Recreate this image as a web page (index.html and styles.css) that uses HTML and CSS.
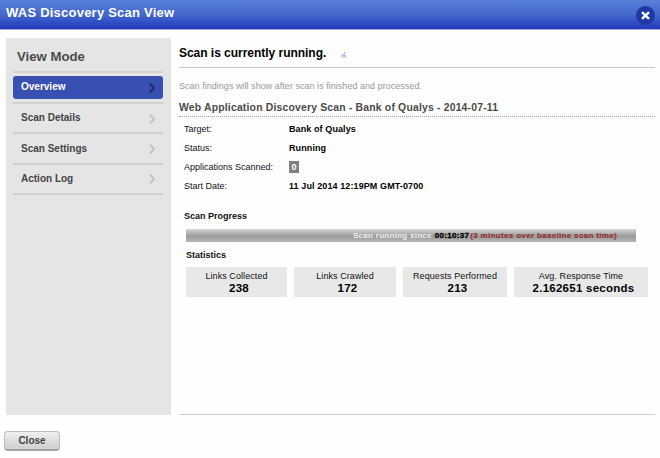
FILE: index.html
```html
<!DOCTYPE html>
<html lang="en">
<head>
<meta charset="utf-8">
<title>WAS Discovery Scan View</title>
<link rel="stylesheet" href="styles.css">
</head>
<body>
<header class="titlebar">
  <h1>WAS Discovery Scan View</h1>
  <button class="dismiss" aria-label="Close window"><svg width="9" height="9" viewBox="0 0 9 9"><path d="M1 1.200l7 6.600M8 1.200l-7 6.600" stroke="#fff" stroke-width="2.400"/></svg></button>
</header>
<div class="body">
  <nav class="sidebar">
    <h2>View Mode</h2>
    <ul>
      <li class="item active"><a><span>Overview</span><svg class="chev" width="6" height="10" viewBox="0 0 6 10"><path d="M1 .7l4 4.300-4 4.300"/></svg></a></li>
      <li class="item"><a><span>Scan Details</span><svg class="chev" width="6" height="10" viewBox="0 0 6 10"><path d="M1 .7l4 4.300-4 4.300"/></svg></a></li>
      <li class="item"><a><span>Scan Settings</span><svg class="chev" width="6" height="10" viewBox="0 0 6 10"><path d="M1 .7l4 4.300-4 4.300"/></svg></a></li>
      <li class="item"><a><span>Action Log</span><svg class="chev" width="6" height="10" viewBox="0 0 6 10"><path d="M1 .7l4 4.300-4 4.300"/></svg></a></li>
    </ul>
  </nav>
  <main class="content">
    <div class="status"><span>Scan is currently running.</span><svg class="spinner" width="8" height="8" viewBox="0 0 8 8"><ellipse cx="3" cy="5" rx="2.5" ry="2" fill="#ccd6ee"/><path d="M5 1L3.500 4.500M5.500 4v2.500" stroke="#a9b8df" stroke-width="1.300"/></svg></div>
    <p class="note">Scan findings will show after scan is finished and processed.</p>
    <h3 class="scan-name">Web Application Discovery Scan - Bank of Qualys - 2014-07-11</h3>
    <dl class="facts">
      <dt>Target:</dt><dd>Bank of Qualys</dd>
      <dt>Status:</dt><dd>Running</dd>
      <dt>Applications Scanned:</dt><dd><span class="count">0</span></dd>
      <dt>Start Date:</dt><dd>11 Jul 2014 12:19PM GMT-0700</dd>
    </dl>
    <h4 class="progress-title">Scan Progress</h4>
    <div class="progress"><span class="since">Scan running since</span><span class="time">00:10:37</span><span class="over">(3 minutes over baseline scan time)</span></div>
    <h4 class="stats-title">Statistics</h4>
    <div class="stats">
      <div class="stat"><span>Links Collected</span><b>238</b></div>
      <div class="stat"><span>Links Crawled</span><b>172</b></div>
      <div class="stat"><span>Requests Performed</span><b>213</b></div>
      <div class="stat"><span>Avg. Response Time</span><b>2.162651 seconds</b></div>
    </div>
  </main>
</div>
<footer><button class="close">Close</button></footer>
</body>
</html>
```
FILE: styles.css
```css
* { box-sizing: border-box; }
body {
  margin: 0;
  width: 660px;
  height: 458px;
  overflow: hidden;
  background: #fefefe;
  color: #111;
  font: 9px/12px "Liberation Sans", Arial, sans-serif;
}
h1, h2, h3, h4, p, ul, dl, dd { margin: 0; padding: 0; }
button { border: 0; padding: 0; font-family: inherit; }
.titlebar {
  height: 30px;
  display: flex;
  justify-content: space-between;
  align-items: center;
  padding: 0 5px 0 6px;
  background: linear-gradient(#5980d9, #4468cd 50%, #2138bd);
  border-bottom: 1px solid #a8b1e4;
}
.titlebar h1 {
  color: #fff;
  font-size: 13px;
  line-height: 16px;
  letter-spacing: .23px;
  padding-bottom: 3px;
}
.dismiss {
  width: 19px;
  height: 19px;
  border-radius: 50%;
  background: #2038a5;
  display: flex;
  align-items: center;
  justify-content: center;
  margin-top: 2px;
}
.body {
  display: flex;
  gap: 8px;
  height: 378px;
  margin: 8px 5px 0 6px;
}
.sidebar {
  width: 165px;
  height: 377px;
  background: #e5e5e5;
  padding: 10px 8px 0 7px;
}
.sidebar h2 {
  font-size: 13.2px;
  line-height: 18px;
  color: #4b4b4b;
  padding-left: 4px;
  height: 25px;
  border-bottom: 2px solid #d3d3d3;
}
.sidebar ul { list-style: none; }
.item {
  height: 30.4px;
  padding: 3px 0 2px;
  border-bottom: 2px solid #d0d0d0;
}
.item a {
  height: 23px;
  display: flex;
  align-items: center;
  justify-content: space-between;
  padding: 0 8px;
  border-radius: 3px;
  font-size: 10px;
  font-weight: bold;
  color: #444;
}
.item span { padding-bottom: 1px; }
.item.active { height: 31px; }
.item.active a { background: #3850b1; color: #fff; }
.item.active span, .item:nth-child(2) span { padding-bottom: 2px; }
.item:nth-child(3) span { padding-bottom: 0; }
.chev { fill: none; stroke: #bfbfbf; stroke-width: 1.8; }
.active .chev { stroke: #1b2a69; stroke-width: 2; }
.content {
  flex: 1;
  height: 377px;
  border-bottom: 1px solid #d0d0d0;
}
.status {
  height: 30px;
  border-bottom: 1px solid #c9c9c9;
  padding-top: 7px;
  display: flex;
  gap: 14px;
  font-size: 12px;
  line-height: 16px;
  font-weight: bold;
  letter-spacing: -.03px;
  color: #000;
}
.spinner { margin-top: 6px; }
.note {
  color: #999;
  padding-top: 12px;
  height: 33px;
  letter-spacing: .03px;
}
.scan-name {
  font-size: 10.4px;
  line-height: 14px;
  height: 16px;
  letter-spacing: .19px;
  color: #4a4a4a;
  border-bottom: 1px dotted #a0a0a0;
}
.facts {
  display: grid;
  grid-template-columns: 105px auto;
  grid-auto-rows: 19px;
  align-items: center;
  padding: 2px 0 0 5px;
}
.facts dd { font-weight: bold; color: #000; letter-spacing: .1px; }
.count {
  display: block;
  width: 10px;
  height: 12px;
  background: #808080;
  color: #fff;
  text-align: center;
}
.progress-title { font-size: 9px; padding: 15px 0 0 5px; height: 34px; }
.progress {
  width: 450px;
  height: 13px;
  margin-left: 7px;
  padding-right: 19px;
  display: flex;
  justify-content: flex-end;
  font-size: 8px;
  line-height: 13px;
  font-weight: bold;
  white-space: nowrap;
  background: linear-gradient(#d6d6d6, #9a9a9a 55%, #b7b7b7);
}
.since { color: #eee; letter-spacing: .28px; margin-right: 3px; }
.time { color: #000; letter-spacing: .3px; margin-right: 1px; -webkit-text-stroke: .3px #000; }
.over { color: #923331; letter-spacing: .33px; -webkit-text-stroke: .2px #923331; }
.stats-title { font-size: 9px; padding: 7px 0 0 7px; height: 25px; }
.stats {
  display: grid;
  grid-template-columns: 101px 102px 104px 134px;
  column-gap: 7px;
  padding-left: 7px;
}
.stat {
  height: 30px;
  background: #e8e8e8;
  text-align: center;
  padding-top: 3px;
  display: flex;
  flex-direction: column;
}
.stat span { letter-spacing: .08px; }
.stat b {
  font-size: 11.5px;
  line-height: 12px;
  letter-spacing: .25px;
  padding-left: 5px;
  color: #000;
}
footer { padding: 15px 0 0 4px; }
.close {
  display: block;
  width: 56px;
  height: 20px;
  border-radius: 4px;
  border: 1px solid #bbb;
  border-bottom: 2px solid #a4a4a4;
  background: linear-gradient(#efefef, #cfcfcf);
  color: #444;
  font-size: 10px;
  font-weight: bold;
  line-height: 17px;
}
```
